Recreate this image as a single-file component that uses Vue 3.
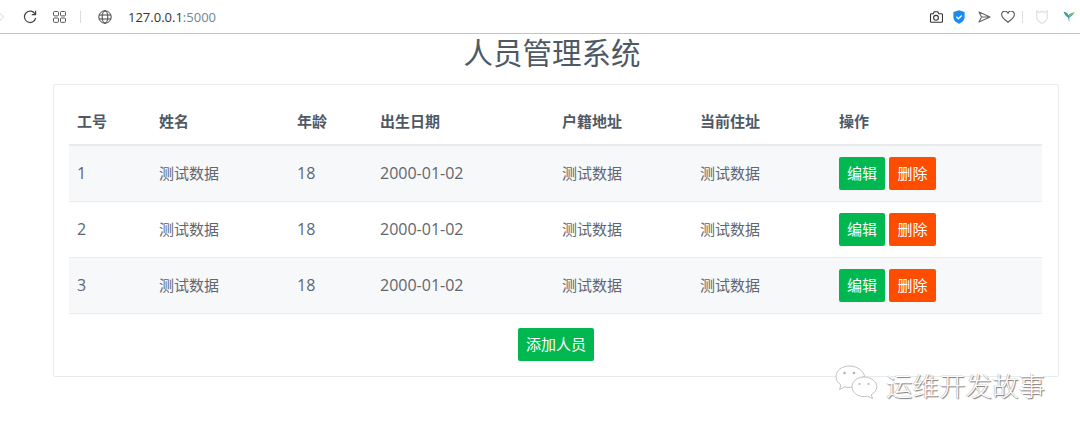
<script setup>
const columns = ['工号', '姓名', '年龄', '出生日期', '户籍地址', '当前住址', '操作']
const widths = [82, 138, 83, 182, 138, 139, 211]
const people = [1, 2, 3].map((id) => ({
  id,
  name: '测试数据',
  age: 18,
  birth: '2000-01-02',
  home: '测试数据',
  current: '测试数据',
}))
</script>

<template>
  <div class="page">
    <header class="browser">
      <div class="nav">
        <svg class="forward" width="6" height="10" viewBox="0 0 6 10"><path d="M0.5 1l4 4-4 4" fill="none" stroke="#d5d5d5" stroke-width="1"/></svg>
        <svg class="reload" width="14" height="14" viewBox="0 0 14 14"><path d="M12.2 4.2A5.7 5.7 0 1 0 12.7 8" fill="none" stroke="#444" stroke-width="1.2"/><path d="M12.6 0.8v3.9H8.8" fill="none" stroke="#444" stroke-width="1.2"/></svg>
        <svg class="apps" width="13" height="12" viewBox="0 0 13 12"><g fill="none" stroke="#555" stroke-width="1"><rect x="0.5" y="0.5" width="5" height="4.4" rx="1"/><rect x="7.5" y="0.5" width="5" height="4.4" rx="1"/><rect x="0.5" y="7" width="5" height="4.4" rx="1"/><rect x="7.5" y="7" width="5" height="4.4" rx="1"/></g></svg>
        <span class="sep"></span>
        <svg class="globe" width="14" height="14" viewBox="0 0 14 14"><g fill="none" stroke="#444" stroke-width="1"><circle cx="7" cy="7" r="6.2"/><ellipse cx="7" cy="7" rx="2.8" ry="6.2"/><path d="M1 5h12M1 9h12"/></g></svg>
        <span class="url">127.0.0.1<span class="port">:5000</span></span>
      </div>
      <div class="tools">
        <svg class="camera" width="14" height="12" viewBox="0 0 14 12"><path d="M1.5 2.7h2.7l1-1.9h3.6l1 1.900h2.700a1 1 0 0 1 1 1v6.600a1 1 0 0 1-1 1h-10a1 1 0 0 1-1-1V3.700a1 1 0 0 1 1-1z" fill="none" stroke="#333" stroke-width="1.100"/><circle cx="7" cy="6.800" r="2.400" fill="none" stroke="#333" stroke-width="1.100"/></svg>
        <svg class="shield" width="12" height="14" viewBox="0 0 12 14"><path d="M6 0.300l5.600 1.800v5.200c0 3-2.600 5.300-5.600 6.400C3 12.600.4 10.300.4 7.300V2.100z" fill="#1a8cf0"/><path d="M3.400 6.800l2 1.900 3.300-3.300" fill="none" stroke="#fff" stroke-width="1.400"/></svg>
        <svg class="send" width="13" height="12" viewBox="0 0 13 12"><path d="M1 1l11 5-11 5 2.500-5zM3.500 6H12" fill="none" stroke="#666" stroke-width="1.100" stroke-linejoin="round"/></svg>
        <svg class="heart" width="14" height="12" viewBox="0 0 14 12"><path d="M7 11.200C3.500 8.600.7 6.600.7 3.900A3.100 3.100 0 0 1 7 2.700a3.100 3.100 0 0 1 6.300 1.200c0 2.700-2.800 4.700-6.300 7.300z" fill="none" stroke="#555" stroke-width="1.100"/></svg>
        <span class="sep"></span>
        <svg class="mask" width="12" height="14" viewBox="0 0 12 14"><path d="M0.800 1l2.800 1.500L6 1.200l2.400 1.300L11.200 1v6.500c0 2.800-2.500 4.700-5.200 6-2.700-1.300-5.200-3.200-5.200-6z" fill="none" stroke="#e6e6e6" stroke-width="1.600"/></svg>
        <svg class="leaf" width="12" height="13" viewBox="0 0 12 13"><path d="M0.600 1.500c2.300.3 4 1.600 5 3.900.9-1.300 3-2.600 5.800-2.800-1.300 2.500-3 4-5 4.900L6.200 12 5 7.400C2.900 6.300 1.300 4.300.6 1.500z" fill="#3f9c96"/><path d="M6.200 6.300c1.400-1.300 3.300-2.700 5.200-3.700" fill="none" stroke="#c3d23a" stroke-width="1"/></svg>
      </div>
    </header>

    <main class="content">
      <h1 class="title">人员管理系统</h1>
      <section class="card">
        <table class="table">
          <colgroup>
            <col v-for="(width, index) in widths" :key="index" :style="{ width: width + 'px' }" />
          </colgroup>
          <thead>
            <tr>
              <th v-for="column in columns" :key="column">{{ column }}</th>
            </tr>
          </thead>
          <tbody>
            <tr v-for="person in people" :key="person.id">
              <td class="num">{{ person.id }}</td>
              <td>{{ person.name }}</td>
              <td class="num">{{ person.age }}</td>
              <td class="num">{{ person.birth }}</td>
              <td>{{ person.home }}</td>
              <td>{{ person.current }}</td>
              <td class="actions">
                <button class="btn green" type="button">编辑</button>
                <button class="btn orange" type="button">删除</button>
              </td>
            </tr>
          </tbody>
        </table>
        <div class="footer">
          <button class="btn green" type="button">添加人员</button>
        </div>
      </section>
    </main>

    <div class="watermark">
      <svg width="44" height="38" viewBox="0 0 44 38">
        <g fill="#fff" stroke="#c2c2c2" stroke-width="1">
          <path d="M14 1C6.800 1 1 5.700 1 11.600c0 3.400 1.900 6.300 4.900 8.300L4.600 24.600l5.200-2.800c1.300.4 2.800.6 4.200.6 1 0 2-.1 3-.3 3-7 8-10 12.600-10.300C29 6 22.300 1 14 1z"/>
          <path d="M29 12c-6.800 0-12 4.300-12 9.800s5.200 9.800 12 9.800c1.300 0 2.500-.2 3.700-.5l4.800 2.500-1.200-4c3.300-1.900 5.500-4.700 5.500-7.800C41.800 16.300 35.800 12 29 12z"/>
        </g>
        <g fill="#b5b5b5"><circle cx="9.500" cy="8" r="1.300"/><circle cx="19" cy="8" r="1.300"/><circle cx="24.500" cy="19" r="1.100"/><circle cx="33.500" cy="19" r="1.100"/></g>
      </svg>
      <span class="wm-text">运维开发故事</span>
    </div>
  </div>
</template>

<style>
html, body { background: #fff; }
</style>

<style scoped>
.page {
  position: relative;
  width: 1080px;
  height: 433px;
  overflow: hidden;
  background: #fff;
  font-family: "Liberation Sans", "Noto Sans CJK SC", sans-serif;
  font-size: 15px;
  color: #5f6670;
}
.browser {
  height: 33px;
  border-bottom: 1px solid #bcc6d0;
  display: flex;
  align-items: center;
  justify-content: space-between;
}
.nav { display: flex; align-items: center; }
.forward { margin-left: -1px; }
.reload { margin-left: 18px; }
.apps { margin-left: 16px; }
.nav .sep { margin-left: 14px; }
.globe { margin-left: 17px; }
.url {
  margin-left: 16px;
  font-family: "Open Sans", "Noto Sans", sans-serif;
  font-size: 13px;
  color: #333;
}
.port { color: #6f8696; }
.sep { display: inline-block; width: 1px; height: 12px; background: #dcdcdc; }
.tools { display: flex; align-items: center; padding-right: 5px; }
.shield { margin-left: 10px; }
.send { margin-left: 13px; }
.heart { margin-left: 10px; }
.tools .sep { margin-left: 7px; }
.mask { margin-left: 13px; }
.leaf { margin-left: 15px; }
.content { padding: 0 21px 0 53px; }
.title {
  margin: 0;
  height: 40px;
  padding-right: 8px;
  line-height: 40px;
  text-align: center;
  font-weight: 400;
  font-size: 29.500px;
  color: #4f5965;
}
.card {
  margin-top: 10px;
  height: 293px;
  box-sizing: border-box;
  padding: 15px 16px 0 15px;
  border: 1px solid #e9ecef;
  border-radius: 2px;
}
.table {
  width: 973px;
  table-layout: fixed;
  border-collapse: collapse;
}
th, td {
  padding: 0 8px;
  text-align: left;
  white-space: nowrap;
  box-sizing: border-box;
}
th {
  height: 45px;
  padding-bottom: 4px;
  font-weight: 700;
  color: #4f5965;
  border-bottom: 2px solid #e9ecef;
}
td {
  height: 56px;
  padding-bottom: 2px;
  border-bottom: 1px solid #e9ecef;
}
td.actions { padding-bottom: 0; font-size: 0; }
.num {
  font-family: "Open Sans", "Noto Sans", sans-serif;
  font-size: 16px;
  padding-bottom: 1px;
}
tbody tr:nth-child(odd) { background: #f7f8fa; }
.btn {
  height: 33px;
  padding: 0 7px 2px;
  border: 1px solid transparent;
  border-radius: 2px;
  font: inherit;
  font-size: 15px;
  color: #fff;
}
.actions .btn + .btn { margin-left: 4px; padding: 0 7.500px 2px; }
.green { background: #00b84f; }
.orange { background: #ff4d00; }
.footer {
  display: flex;
  justify-content: center;
  margin-top: 14px;
  padding-left: 1px;
}
.footer .btn { padding: 0 7px 2px; width: 76px; }
.watermark {
  position: absolute;
  left: 835px;
  top: 365px;
  display: flex;
  align-items: center;
}
.wm-text {
  margin-left: 7px;
  margin-top: 2px;
  font-family: "Noto Sans CJK SC", sans-serif;
  font-size: 26.500px;
  font-weight: 300;
  line-height: 1;
  color: #fff;
  text-shadow: 1px 1px 1px #777, -0.5px -0.5px 0 #aaa;
}
</style>
